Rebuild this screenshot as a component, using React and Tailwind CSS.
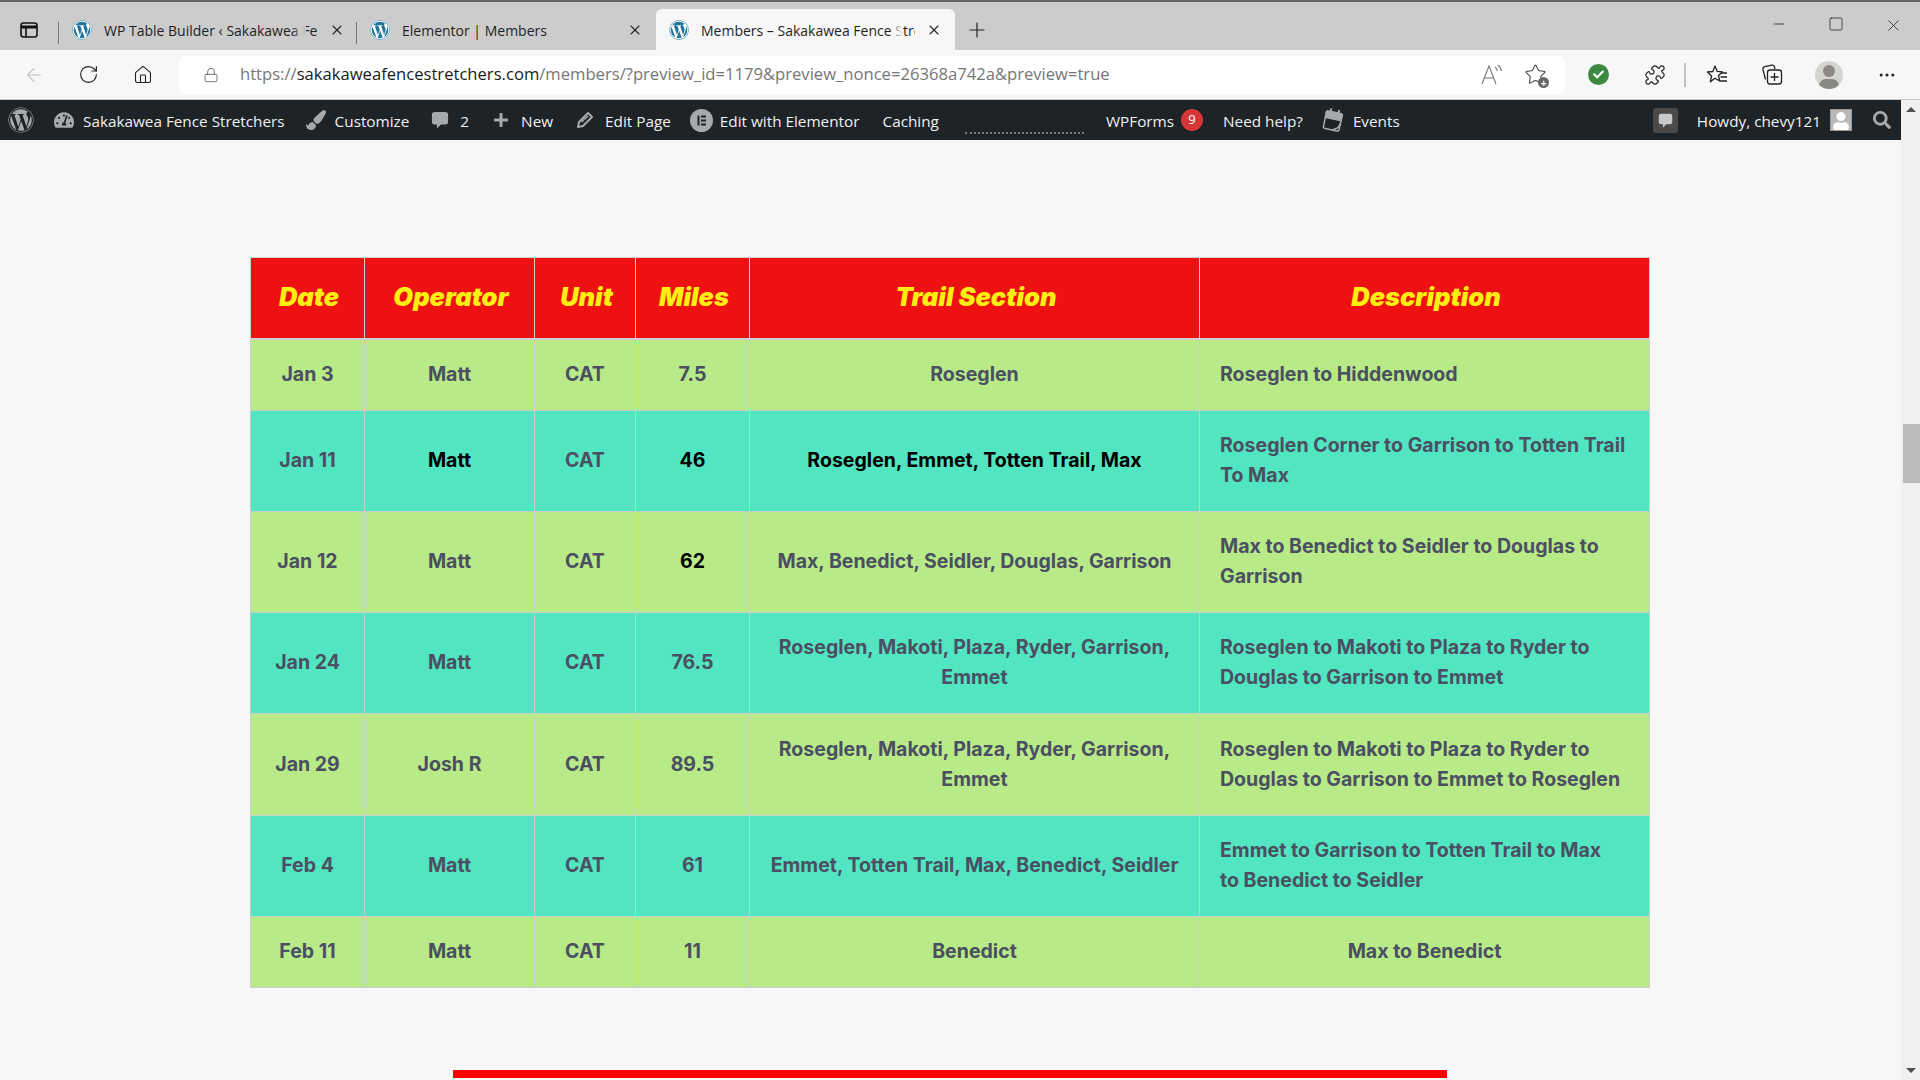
import React from "react";
import { ArrowLeft, RotateCw, Home, Lock, Plus, X, Minus, Square, MoreHorizontal, Puzzle, Star } from "lucide-react";
import { FaWordpress, FaTachometerAlt, FaPaintBrush, FaPlus, FaSearch, FaCheck, FaUser } from "react-icons/fa";

const ui = { fontFamily: '"Open Sans", "Noto Sans", sans-serif' };
const cellFont = { fontFamily: 'Inter, "Noto Sans", sans-serif' };

function WpIcon() {
  return (
    <span className="flex h-[20px] w-[20px] items-center justify-center rounded-full bg-white">
      <FaWordpress className="h-[20px] w-[20px] text-[#21759b]" />
    </span>
  );
}

function Tab({ title, width, active, fade }) {
  return (
    <div
      className={`relative flex h-[41px] items-center ${active ? "rounded-t-[6px] bg-[#f7f7f7]" : ""}`}
      style={{ width }}
    >
      <span className="ml-[13px] shrink-0"><WpIcon /></span>
      <span className="ml-[12px] h-[20px] w-[214px] overflow-hidden whitespace-nowrap pt-[1px] text-[14px] leading-[20px] text-[#1f1f1f]">{title}</span>
      {fade && <span className={`absolute left-[233px] h-[20px] w-[14px] ${active ? "bg-gradient-to-r from-transparent to-[#f7f7f7]" : "bg-gradient-to-r from-transparent to-[#cccccc]"}`} />}
      <X className="ml-[11px] h-[16px] w-[16px] shrink-0 text-[#222]" strokeWidth={1.6} />
    </div>
  );
}

function Divider() {
  return <span className="mb-[6px] h-[22px] w-px shrink-0 self-end bg-[#777]" />;
}

function Titlebar() {
  return (
    <div className="flex h-[50px] items-end border-t-2 border-[#666] bg-[#cccccc]" style={ui}>
      <div className="flex h-[41px] w-[58px] items-center pl-[20px]">
        <svg width="18" height="18" viewBox="0 0 18 18" fill="none" stroke="#111" strokeWidth="1.6">
          <rect x="1" y="2" width="16" height="14" rx="2.5" />
          <path d="M1 6h16" strokeWidth="3" />
          <path d="M6 6v10" />
        </svg>
      </div>
      <Divider />
      <Tab title="WP Table Builder ‹ Sakakawea Fence Stretchers" width={297} fade />
      <Divider />
      <Tab title="Elementor | Members" width={299} />
      <Tab title="Members – Sakakawea Fence Stretchers" width={299} active fade />
      <div className="flex h-[41px] w-[44px] items-center justify-center">
        <Plus className="h-[24px] w-[24px] text-[#222]" strokeWidth={1.2} />
      </div>
      <div className="ml-auto flex h-[41px] items-start pt-[7px] text-[#333]">
        <span className="flex w-[57px] justify-center"><Minus className="h-[16px] w-[16px]" strokeWidth={1.3} /></span>
        <span className="flex w-[57px] justify-center"><Square className="h-[16px] w-[16px]" strokeWidth={1.3} /></span>
        <span className="flex w-[56px] justify-center pl-[2px]"><X className="h-[19px] w-[19px]" strokeWidth={1.1} /></span>
      </div>
    </div>
  );
}

function ReadAloud() {
  return (
    <svg width="24" height="24" viewBox="0 0 24 24" fill="none" stroke="#777" strokeWidth="1.1">
      <path d="M2 21 9 3l7 18M4.5 15h9" />
      <path d="M15 4c1.5 1 2.2 2.3 2.2 4M18 2c2 1.5 3.2 3.5 3.2 6" />
    </svg>
  );
}

function FavIcon() {
  return (
    <svg width="22" height="22" viewBox="0 0 22 22" fill="none" stroke="#222" strokeWidth="1.3" strokeLinejoin="round">
      <path d="M9 2l2.2 5.4 5.3.4-4 3.6 1.2 5.6L9 14.200l-4.700 3.600 1.300-5.800L1.500 8l5.300-.5z" />
      <path d="M15 9h6M14.500 13h6.500M14 17h7" />
    </svg>
  );
}

function Collections() {
  return (
    <svg width="22" height="22" viewBox="0 0 22 22" fill="none" stroke="#222" strokeWidth="1.3">
      <path d="M4.500 15.500 2 5.500C1.700 4 2.500 3 3.800 2.700l7-1.500c1.300-.3 2.400.5 2.700 1.800l.4 2" />
      <rect x="6.500" y="6" width="14" height="14" rx="2.500" />
      <path d="M13.500 9v8M9.500 13h8" />
    </svg>
  );
}

function Toolbar() {
  return (
    <div className="flex h-[50px] items-center border-b border-[#c9c9c9] bg-[#f7f7f7]" style={ui}>
      <span className="ml-[23px] w-[22px]"><ArrowLeft className="h-[22px] w-[22px] text-[#bdbdbd]" strokeWidth={1.1} /></span>
      <span className="ml-[33px] w-[22px]"><RotateCw className="h-[21px] w-[21px] text-[#222]" strokeWidth={1.3} /></span>
      <span className="ml-[33px] w-[20px]"><Home className="h-[20px] w-[20px] text-[#222]" strokeWidth={1.3} /></span>
      <div className="ml-[26px] flex h-[38px] w-[1386px] items-center rounded-[6px] bg-white">
        <Lock className="ml-[24px] h-[18px] w-[16px] text-[#555]" strokeWidth={1.2} />
        <span className="ml-[21px] whitespace-nowrap text-[16.62px] text-[#767676]">
          https://<span className="text-[#1a1a1a]">sakakaweafencestretchers.com</span>/members/?preview_id=1179&amp;preview_nonce=26368a742a&amp;preview=true
        </span>
        <span className="ml-auto"><ReadAloud /></span>
        <span className="relative ml-[20px] mr-[18px]">
          <Star className="h-[23px] w-[23px] text-[#444]" strokeWidth={1.1} />
          <span className="absolute bottom-[-2px] right-[-2px] flex h-[11px] w-[11px] items-center justify-center rounded-full bg-[#666] text-[10px] font-bold leading-none text-white">+</span>
        </span>
      </div>
      <span className="ml-[23px] flex h-[21px] w-[21px] items-center justify-center rounded-full bg-[#3b8a3f]"><FaCheck className="h-[11px] w-[11px] text-white" /></span>
      <span className="ml-[35px] w-[22px]"><Puzzle className="h-[22px] w-[22px] text-[#222]" strokeWidth={1.3} /></span>
      <span className="ml-[18px] h-[24px] w-[2px] bg-[#c0c0c0]" />
      <span className="ml-[20px] w-[22px]"><FavIcon /></span>
      <span className="ml-[33px] w-[22px]"><Collections /></span>
      <span className="relative ml-[32px] h-[28px] w-[28px] overflow-hidden rounded-full bg-[#d6d4d0]">
        <span className="absolute left-[8px] top-[4px] h-[12px] w-[12px] rounded-full bg-[#8a8885]" />
        <span className="absolute left-[4px] top-[18px] h-[14px] w-[20px] rounded-full bg-[#8a8885]" />
      </span>
      <span className="ml-[34px]"><MoreHorizontal className="h-[20px] w-[20px] text-[#222]" strokeWidth={1.7} /></span>
    </div>
  );
}

function AdminItem({ left, icon, children }) {
  return (
    <div className="flex items-center whitespace-nowrap" style={{ marginLeft: left }}>
      {icon}
      <span className="pt-[2px]">{children}</span>
    </div>
  );
}

function Bubble({ size, color, className }) {
  return (
    <svg width={size} height={size} viewBox="0 0 20 20" fill={color} className={className}>
      <path d="M4 1h12a3 3 0 0 1 3 3v8a3 3 0 0 1-3 3h-5l-4.500 4.500V15H4a3 3 0 0 1-3-3V4a3 3 0 0 1 3-3z" />
    </svg>
  );
}

function Pencil({ className }) {
  return (
    <svg width="18" height="18" viewBox="0 0 18 18" fill="none" stroke="#a7aaad" strokeWidth="2" className={className}>
      <path d="M2 16l1-5L12 2l4 4-9 9z" strokeLinejoin="round" />
      <path d="M5.500 11 12 5" strokeWidth="1.500" />
    </svg>
  );
}

function ElementorIcon({ className }) {
  return (
    <svg width="23" height="23" viewBox="0 0 23 23" className={className}>
      <circle cx="11.500" cy="11.500" r="11.500" fill="#a7aaad" />
      <g fill="#1d2327">
        <rect x="7.500" y="6.500" width="2" height="10" />
        <rect x="11" y="6.500" width="5" height="2" />
        <rect x="11" y="10.500" width="5" height="2" />
        <rect x="11" y="14.500" width="5" height="2" />
      </g>
    </svg>
  );
}

function CalendarIcon({ className }) {
  return (
    <svg width="22" height="24" viewBox="0 0 22 24" fill="none" stroke="#a7aaad" strokeWidth="1.500" className={className}>
      <g transform="rotate(12 11 12)">
        <rect x="3" y="4" width="16" height="18" rx="2" />
        <path d="M3 5h16v6H3z" fill="#a7aaad" />
        <path d="M7 1v4M15 1v4" strokeWidth="2" />
        <path d="M19 14c-1 5-3 6-7 8" />
      </g>
    </svg>
  );
}

function AdminBar() {
  const ic = "text-[#a7aaad]";
  return (
    <div className="flex h-[40px] w-full items-center bg-[#1d2327] text-[15.3px] text-[#f0f0f1]" style={ui}>
      <AdminItem left={8} icon={<FaWordpress className={`h-[26px] w-[26px] ${ic}`} />} />
      <AdminItem left={20} icon={<FaTachometerAlt className={`mr-[9px] h-[20px] w-[20px] ${ic}`} />}>Sakakawea Fence Stretchers</AdminItem>
      <AdminItem left={21} icon={<FaPaintBrush className={`mr-[9px] h-[20px] w-[20px] ${ic}`} />}>Customize</AdminItem>
      <AdminItem left={22} icon={<Bubble size={18} color="#a7aaad" className="mr-[11px]" />}>2</AdminItem>
      <AdminItem left={24} icon={<FaPlus className={`mr-[12px] h-[16px] w-[16px] ${ic}`} />}>New</AdminItem>
      <AdminItem left={23} icon={<Pencil className="mr-[11px]" />}>Edit Page</AdminItem>
      <AdminItem left={19} icon={<ElementorIcon className="mr-[7px]" />}>Edit with Elementor</AdminItem>
      <AdminItem left={23}>Caching</AdminItem>
      <div className="ml-[26px] mt-[26px] w-[119px] border-t-2 border-dotted border-[#777]" />
      <AdminItem left={22}>WPForms</AdminItem>
      <span className="ml-[7px] flex h-[22px] w-[22px] items-center justify-center rounded-full bg-[#d63638] text-[13px] text-white">9</span>
      <AdminItem left={20}>Need help?</AdminItem>
      <AdminItem left={19} icon={<CalendarIcon className="mr-[9px]" />}>Events</AdminItem>
      <div className="ml-auto flex h-[25px] w-[25px] items-center justify-center rounded-[3px] bg-[#4a4a4a]">
        <Bubble size={15} color="#c9c9c9" />
      </div>
      <span className="ml-[19px] whitespace-nowrap pt-[2px]">Howdy, chevy121</span>
      <span className="ml-[9px] flex h-[22px] w-[22px] items-end justify-center overflow-hidden border border-[#999] bg-[#b9b9b9]">
        <FaUser className="h-[18px] w-[18px] text-white" />
      </span>
      <FaSearch className="ml-[21px] mr-[10px] h-[18px] w-[18px] text-[#a7aaad]" />
    </div>
  );
}

const GRAY = "#4b4f62";
const rows = [
  { h: 72, bg: "bg-[#b9ea88]", c: ["Jan 3", "Matt", "CAT", "7.5", "Roseglen", "Roseglen to Hiddenwood"] },
  { h: 101, bg: "bg-[#52e5c1]", black: [1, 3, 4], c: ["Jan 11", "Matt", "CAT", "46", "Roseglen, Emmet, Totten Trail, Max", "Roseglen Corner to Garrison to Totten Trail To Max"] },
  { h: 101, bg: "bg-[#b9ea88]", black: [3], c: ["Jan 12", "Matt", "CAT", "62", "Max, Benedict, Seidler, Douglas, Garrison", "Max to Benedict to Seidler to Douglas to Garrison"] },
  { h: 101, bg: "bg-[#52e5c1]", c: ["Jan 24", "Matt", "CAT", "76.5", "Roseglen, Makoti, Plaza, Ryder, Garrison, Emmet", "Roseglen to Makoti to Plaza to Ryder to Douglas to Garrison to Emmet"] },
  { h: 102, bg: "bg-[#b9ea88]", c: ["Jan 29", "Josh R", "CAT", "89.5", "Roseglen, Makoti, Plaza, Ryder, Garrison, Emmet", "Roseglen to Makoti to Plaza to Ryder to Douglas to Garrison to Emmet to Roseglen"] },
  { h: 101, bg: "bg-[#52e5c1]", c: ["Feb 4", "Matt", "CAT", "61", "Emmet, Totten Trail, Max, Benedict, Seidler", "Emmet to Garrison to Totten Trail to Max\nto Benedict to Seidler"] },
  { h: 71, bg: "bg-[#b9ea88]", center: true, c: ["Feb 11", "Matt", "CAT", "11", "Benedict", "Max to Benedict"] },
];
const heads = ["Date", "Operator", "Unit", "Miles", "Trail Section", "Description"];

function DataTable() {
  return (
    <table className="mx-auto w-[1400px] table-fixed border-collapse text-[19.55px] leading-[30px]" style={cellFont}>
      <colgroup>
        <col className="w-[114px]" /><col className="w-[170px]" /><col className="w-[101px]" />
        <col className="w-[114px]" /><col className="w-[450px]" /><col className="w-[450px]" />
      </colgroup>
      <thead>
        <tr className="h-[81px] bg-[#ee1111]">
          {heads.map((t) => (
            <th key={t} className="border border-b-2 border-[#d0d0d0] pb-[2px] pl-[3px] text-center text-[25.5px] font-black italic text-[#ffee11]">{t}</th>
          ))}
        </tr>
      </thead>
      <tbody>
        {rows.map((r, i) => (
          <tr key={i} className={r.bg} style={{ height: r.h }}>
            {r.c.map((t, j) => {
              const isDesc = j === 5 && !r.center;
              return (
                <td
                  key={j}
                  className={`whitespace-pre-line border border-[#c9d0c9] pb-[2px] font-bold ${isDesc ? "px-[20px] text-left" : "px-[20px] text-center"} ${j < 4 ? "!px-[4px]" : ""}`}
                  style={{ color: r.black && r.black.includes(j) ? "#000" : GRAY }}
                >
                  {t}
                </td>
              );
            })}
          </tr>
        ))}
      </tbody>
    </table>
  );
}

function Scrollbar() {
  return (
    <div className="flex w-[19px] shrink-0 flex-col items-center bg-[#f0f0f0]">
      <span className="mt-[7px] h-0 w-0 border-x-[5px] border-b-[5px] border-x-transparent border-b-[#505050]" />
      <span className="ml-[2px] mt-[312px] h-[59px] w-[17px] bg-[#bcbcbc]" />
      <span className="mb-[7px] mt-auto h-0 w-0 border-x-[5px] border-t-[5px] border-x-transparent border-t-[#505050]" />
    </div>
  );
}

export default function App() {
  return (
    <div className="flex h-[1080px] w-[1920px] flex-col overflow-hidden bg-[#f7f7f7]">
      <Titlebar />
      <Toolbar />
      <div className="flex min-h-0 flex-1">
        <div className="min-w-0 flex-1 overflow-hidden">
          <AdminBar />
          <div className="pr-px pt-[117px]">
            <DataTable />
            <div className="mx-auto mt-[82px] h-[8px] w-[994px] bg-[#ff0000]" />
          </div>
        </div>
        <Scrollbar />
      </div>
    </div>
  );
}
